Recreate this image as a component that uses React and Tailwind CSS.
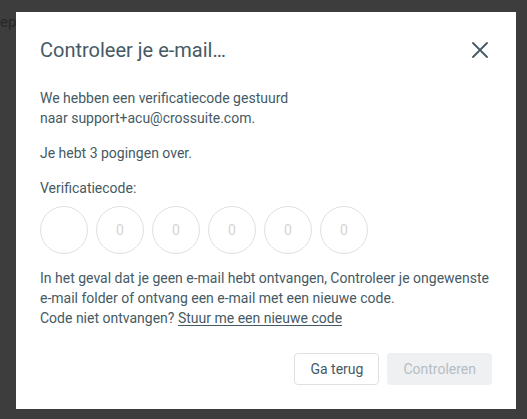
export default function App() {
  return (
    <div
      className="relative w-[527px] h-[419px] overflow-hidden bg-[#3d3d3d]"
      style={{ fontFamily: "Roboto, 'Liberation Sans', sans-serif" }}
    >
      <div className="absolute left-[0px] top-[12px] text-[15px] leading-[20px] text-[#272727]">
        ep
      </div>

      <div className="absolute left-[16px] top-[12px] w-[500px] h-[397px] bg-white px-6 pt-6 pb-6 flex flex-col text-[#455a64]">
        <div className="flex items-center justify-between h-[28px]">
          <h2 className="text-[20px] leading-[28px] font-normal">
            Controleer je e-mail…
          </h2>
          <button className="w-[28px] h-[28px] flex items-center justify-center mr-[-2px]">
            <svg width="16" height="16" viewBox="0 0 16 16" fill="none">
              <path
                d="M1 1L15 15M15 1L1 15"
                stroke="#455a64"
                strokeWidth="1.8"
                strokeLinecap="round"
              />
            </svg>
          </button>
        </div>

        <p className="mt-[24px] text-[14px] leading-[20px]">
          We hebben een verificatiecode gestuurd
          <br />
          naar support+acu@crossuite.com.
        </p>

        <p className="mt-[15px] text-[14px] leading-[20px]">
          Je hebt 3 pogingen over.
        </p>

        <p className="mt-[15px] text-[14px] leading-[20px]">Verificatiecode:</p>

        <div className="mt-[8px] flex gap-2">
          {["", "0", "0", "0", "0", "0"].map((ph, i) => (
            <div
              key={i}
              className="w-[48px] h-[48px] rounded-full border border-[#e0e0e0] flex items-center justify-center text-[14px] text-[#d4d4d4]"
            >
              {ph}
            </div>
          ))}
        </div>

        <p className="mt-[14px] text-[14px] leading-[20px]">
          In het geval dat je geen e-mail hebt ontvangen, Controleer je ongewenste
          <br />
          e-mail folder of ontvang een e-mail met een nieuwe code.
          <br />
          Code niet ontvangen?{" "}
          <a className="underline underline-offset-2 cursor-pointer">
            Stuur me een nieuwe code
          </a>
        </p>

        <div className="mt-auto flex justify-end gap-2">
          <button className="h-[32px] px-[15px] rounded-[4px] border border-[#dde1e5] text-[14px] text-[#455a64] bg-white">
            Ga terug
          </button>
          <button className="h-[32px] px-[16px] rounded-[4px] bg-[#eef0f2] text-[14px] text-[#b6bdc3]">
            Controleren
          </button>
        </div>
      </div>
    </div>
  );
}
